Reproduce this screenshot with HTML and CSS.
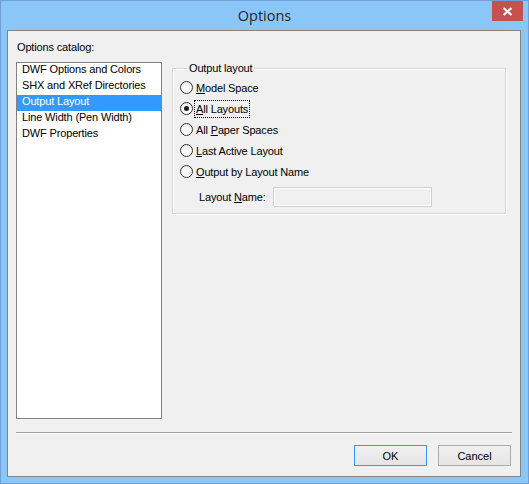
FILE: index.html
```html
<!DOCTYPE html>
<html lang="en">
<head>
    <meta charset="UTF-8">
    <title>Options</title>
    <link rel="stylesheet" href="styles.css">
</head>
<body>
    <div class="window">
        <div class="titlebar">
            <span class="title">Options</span>
            <span class="close">
                <svg width="11" height="9" viewBox="0 0 11 9">
                    <path d="M1.5 1 L9.5 8 M9.5 1 L1.5 8" stroke="#fff" stroke-width="2" fill="none"/>
                </svg>
            </span>
        </div>
        <div class="client">
            <div class="catalog-label">Options catalog:</div>
            <div class="panes">
                <ul class="catalog">
                    <li>DWF Options and Colors</li>
                    <li>SHX and XRef Directories</li>
                    <li class="selected">Output Layout</li>
                    <li>Line Width (Pen Width)</li>
                    <li>DWF Properties</li>
                </ul>
                <fieldset class="group">
                    <legend>Output layout</legend>
                    <div class="radio-row"><span class="radio"></span><span class="radio-label"><u>M</u>odel Space</span></div>
                    <div class="radio-row"><span class="radio checked"></span><span class="radio-label focused"><u>A</u>ll Layouts</span></div>
                    <div class="radio-row"><span class="radio"></span><span class="radio-label">All <u>P</u>aper Spaces</span></div>
                    <div class="radio-row"><span class="radio"></span><span class="radio-label"><u>L</u>ast Active Layout</span></div>
                    <div class="radio-row"><span class="radio"></span><span class="radio-label"><u>O</u>utput by Layout Name</span></div>
                    <div class="name-row">
                        <span class="name-label">Layout <u>N</u>ame:</span>
                        <span class="textbox"></span>
                    </div>
                </fieldset>
            </div>
            <div class="separator"></div>
            <div class="buttons">
                <button type="button" class="btn default">OK</button>
                <button type="button" class="btn">Cancel</button>
            </div>
        </div>
    </div>
</body>
</html>
```

FILE: styles.css
```css
html, body {
    margin: 0;
    padding: 0;
}

body {
    font-family: "Liberation Sans", Arial, sans-serif;
    font-size: 11px;
    letter-spacing: -0.15px;
    color: #000;
}

.window {
    width: 529px;
    height: 484px;
    box-sizing: border-box;
    border: 1px solid #6e9fd6;
    background-color: #8bc6f9;
    display: flex;
    flex-direction: column;
}

/* Title bar */
.titlebar {
    height: 29px;
    display: grid;
    grid-template-columns: 1fr auto 1fr;
    align-items: start;
}

.title {
    grid-column: 2;
    font-family: "Open Sans", "Noto Sans", sans-serif;
    font-size: 14.5px;
    letter-spacing: 0;
    line-height: 20px;
    margin-top: 5px;
    color: #262626;
}

.close {
    grid-column: 3;
    justify-self: end;
    width: 31px;
    height: 20px;
    margin-right: 5px;
    background-color: #c75050;
    display: flex;
    align-items: center;
    justify-content: center;
}

/* Client area */
.client {
    flex: 1;
    margin: 0 7px 6px 6px;
    border: 1px solid #838383;
    background-color: #f0f0f0;
    padding: 10px 8px 0 8px;
    display: flex;
    flex-direction: column;
}

.catalog-label {
    line-height: 13px;
    margin-left: 1px;
}

.panes {
    display: flex;
    align-items: flex-start;
    margin-top: 8px;
    height: 357px;
}

.catalog {
    list-style: none;
    margin: 0;
    padding: 0;
    width: 146px;
    height: 357px;
    box-sizing: border-box;
    border: 1px solid #828282;
    background-color: #fff;
}

.catalog li {
    line-height: 13px;
    padding: 0 0 3px 5px;
    white-space: nowrap;
}

.catalog li.selected {
    background-color: #3399ff;
    color: #fff;
}

/* Group box */
.group {
    width: 334px;
    box-sizing: border-box;
    margin: 0 0 0 10px;
    padding: 2px 0 6px 7px;
    border: 1px solid #d5d5d5;
    box-shadow: inset 1px 1px 0 #fff, 1px 1px 0 #fff;
}

.group legend {
    margin-left: 7px;
    padding: 0 2px;
    line-height: 13px;
}

.radio-row {
    height: 21px;
    display: flex;
    align-items: center;
}

.radio {
    width: 13px;
    height: 13px;
    box-sizing: border-box;
    border: 1px solid #333;
    border-radius: 50%;
    background: linear-gradient(#f0f0f0, #fff);
    margin-right: 1px;
    display: flex;
    align-items: center;
    justify-content: center;
}

.radio.checked::after {
    content: "";
    width: 5px;
    height: 5px;
    border-radius: 50%;
    background-color: #1a1a1a;
}

.radio-label {
    padding: 2px 1px;
    line-height: 12px;
    border: 1px dotted transparent;
}

.radio-label.focused {
    border-color: #000;
}

.name-row {
    display: flex;
    align-items: center;
    margin-top: 5px;
    padding-left: 19px;
}

.name-label {
    width: 74px;
}

.textbox {
    width: 159px;
    height: 20px;
    box-sizing: border-box;
    border: 1px solid #d0d0d0;
    box-shadow: inset 0 0 0 1px #fff;
    background-color: #f0f0f0;
}

/* Bottom */
.separator {
    margin-top: 13px;
    border-top: 1px solid #a0a0a0;
    border-bottom: 1px solid #fff;
}

.buttons {
    display: flex;
    justify-content: flex-end;
    gap: 11px;
    margin-top: 11px;
    padding-right: 1px;
}

.btn {
    width: 73px;
    height: 21px;
    box-sizing: border-box;
    border: 1px solid #acacac;
    background: linear-gradient(#f0f0f0, #e5e5e5);
    font-family: "Liberation Sans", Arial, sans-serif;
    font-size: 11px;
    color: #000;
    padding: 0;
}

.btn.default {
    border-color: #3399ff;
}
```
